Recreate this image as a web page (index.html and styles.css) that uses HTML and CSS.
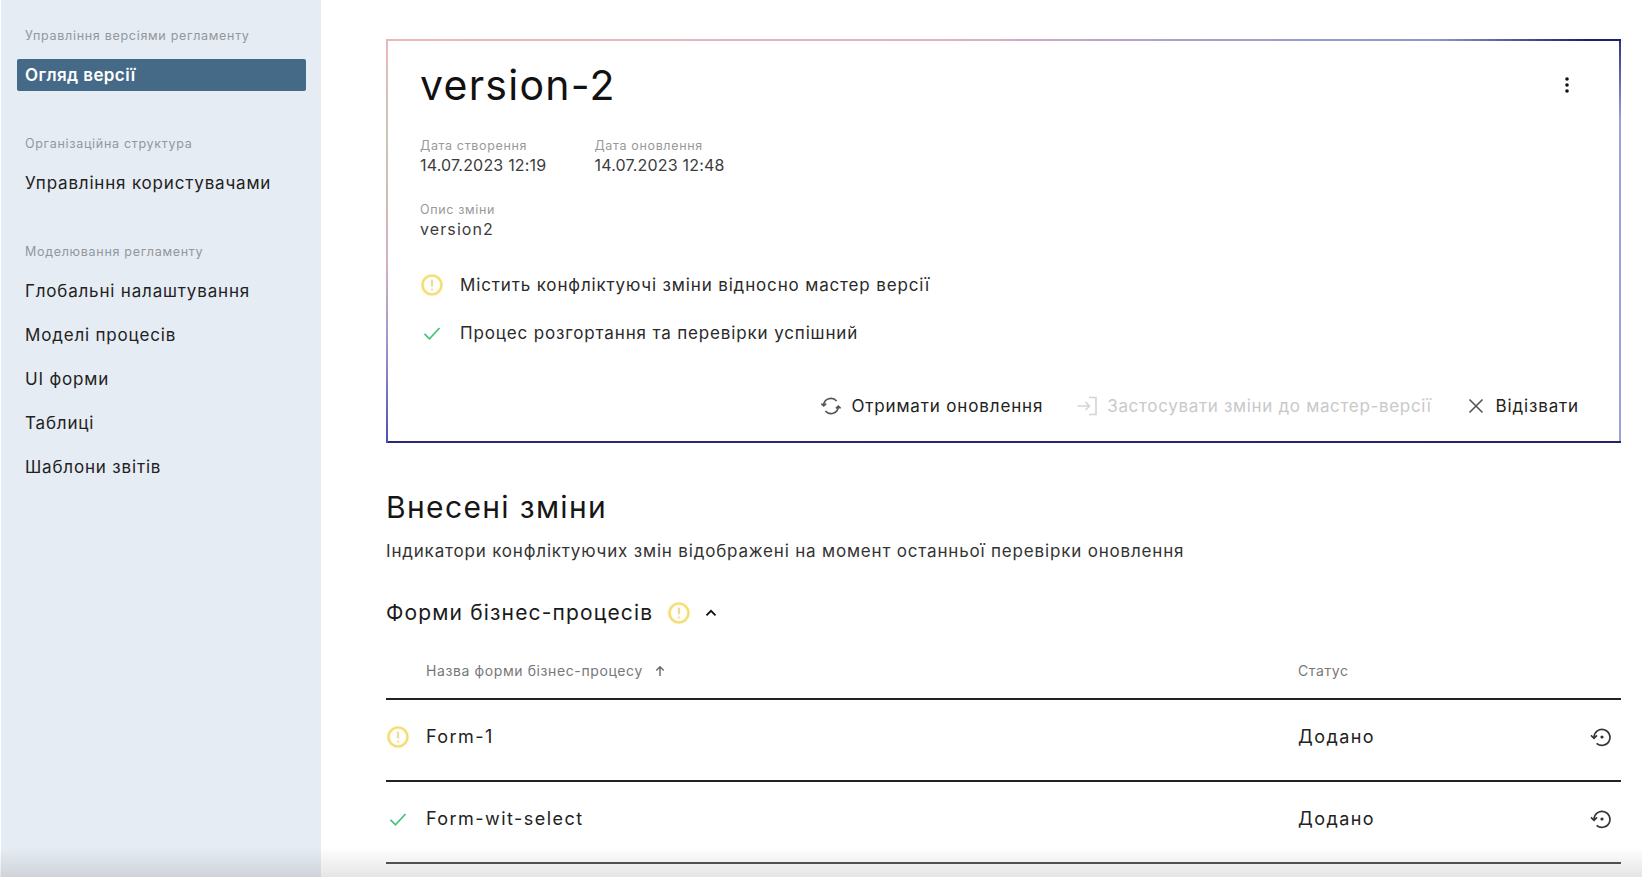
FILE: index.html
```html
<!DOCTYPE html>
<html lang="uk">
<head>
<meta charset="utf-8">
<title>Огляд версії</title>
<link rel="stylesheet" href="styles.css">
</head>
<body>
<div class="app">
  <aside class="sidebar">
    <div class="group">
      <div class="group-label">Управління версіями регламенту</div>
      <a class="nav-item active">Огляд версії</a>
    </div>
    <div class="group">
      <div class="group-label">Організаційна структура</div>
      <a class="nav-item">Управління користувачами</a>
    </div>
    <div class="group">
      <div class="group-label">Моделювання регламенту</div>
      <a class="nav-item">Глобальні налаштування</a>
      <a class="nav-item">Моделі процесів</a>
      <a class="nav-item">UI форми</a>
      <a class="nav-item">Таблиці</a>
      <a class="nav-item">Шаблони звітів</a>
    </div>
  </aside>
  <main class="content">
    <section class="card">
      <div class="card-head">
        <h1 class="version-title">version-2</h1>
        <svg class="kebab" width="6" height="18" viewBox="0 0 6 18"><circle cx="3" cy="3" r="1.8"/><circle cx="3" cy="9" r="1.8"/><circle cx="3" cy="15" r="1.8"/></svg>
      </div>
      <div class="meta-row">
        <div class="meta"><div class="meta-label">Дата створення</div><div class="meta-value">14.07.2023 12:19</div></div>
        <div class="meta"><div class="meta-label">Дата оновлення</div><div class="meta-value">14.07.2023 12:48</div></div>
      </div>
      <div class="meta desc"><div class="meta-label">Опис зміни</div><div class="meta-value wide">version2</div></div>
      <div class="status-list">
        <div class="status-line">
          <svg class="ico-warn" width="24" height="24" viewBox="0 0 24 24"><circle cx="12" cy="12" r="9.5"/><path d="M12 6.8v6.4M12 15.8v1.4"/></svg>
          <span>Містить конфліктуючі зміни відносно мастер версії</span>
        </div>
        <div class="status-line">
          <svg class="ico-ok" width="24" height="24" viewBox="0 0 24 24"><path d="M4.5 12.8l5 5L19.5 7"/></svg>
          <span>Процес розгортання та перевірки успішний</span>
        </div>
      </div>
      <div class="actions">
        <button class="action">
          <svg class="ico-line" width="22" height="22" viewBox="0 0 22 22"><path d="M3.6 10.2a7.4 7.4 0 0 1 13-4.1M18.4 11.8a7.4 7.4 0 0 1-13 4.1"/><path d="M1.4 8.6l2.3 2.3 2.4-2.3M20.6 13.4l-2.3-2.3-2.4 2.3"/></svg>
          Отримати оновлення
        </button>
        <button class="action disabled">
          <svg class="ico-line" width="22" height="22" viewBox="0 0 22 22"><path d="M1.5 11h11.5M9.5 7l4 4-4 4M13 2.5h7v17h-7"/></svg>
          Застосувати зміни до мастер-версії
        </button>
        <button class="action">
          <svg class="ico-line" width="22" height="22" viewBox="0 0 22 22"><path d="M4.5 4.5l13 13M17.5 4.5l-13 13"/></svg>
          Відізвати
        </button>
      </div>
    </section>

    <h2 class="changes-title">Внесені зміни</h2>
    <p class="changes-note">Індикатори конфліктуючих змін відображені на момент останньої перевірки оновлення</p>

    <div class="section-head">
      <span>Форми бізнес-процесів</span>
      <svg class="ico-warn" width="24" height="24" viewBox="0 0 24 24"><circle cx="12" cy="12" r="9.5"/><path d="M12 6.8v6.4M12 15.8v1.4"/></svg>
      <svg class="chevron" width="12" height="8" viewBox="0 0 12 8"><path d="M1.5 6.3L6 1.8l4.5 4.5"/></svg>
    </div>

    <div class="table">
      <div class="row head">
        <div class="cell-icon"></div>
        <div class="cell-name">Назва форми бізнес-процесу
          <svg class="sort" width="12" height="12" viewBox="0 0 12 12"><path d="M6 11V2M2.3 5.5L6 1.8l3.7 3.7"/></svg>
        </div>
        <div class="cell-status">Статус</div>
        <div class="cell-action"></div>
      </div>
      <div class="row">
        <div class="cell-icon"><svg class="ico-warn" width="24" height="24" viewBox="0 0 24 24"><circle cx="12" cy="12" r="9.5"/><path d="M12 6.8v6.4M12 15.8v1.4"/></svg></div>
        <div class="cell-name">Form-1</div>
        <div class="cell-status">Додано</div>
        <div class="cell-action"><svg class="ico-history" width="24" height="24" viewBox="0 0 24 24"><path d="M5 12a8 8 0 1 1 2.6 6.3"/><path d="M2 10.4l3 3 3-3"/><circle class="dot" cx="13" cy="12" r="1.6"/></svg></div>
      </div>
      <div class="row">
        <div class="cell-icon"><svg class="ico-ok" width="24" height="24" viewBox="0 0 24 24"><path d="M4.5 12.8l5 5L19.5 7"/></svg></div>
        <div class="cell-name">Form-wit-select</div>
        <div class="cell-status">Додано</div>
        <div class="cell-action"><svg class="ico-history" width="24" height="24" viewBox="0 0 24 24"><path d="M5 12a8 8 0 1 1 2.6 6.3"/><path d="M2 10.4l3 3 3-3"/><circle class="dot" cx="13" cy="12" r="1.6"/></svg></div>
      </div>
    </div>
  </main>
  <div class="fade"></div>
</div>
</body>
</html>
```
FILE: styles.css
```css
* { box-sizing: border-box; }
html, body { margin: 0; height: 100%; }
body {
  background: #fff;
  color: #1c1c1c;
  font-family: Inter, "Noto Sans", sans-serif;
  overflow: hidden;
}
.app { display: flex; height: 877px; position: relative; overflow: hidden; }

.sidebar {
  width: 320px;
  flex: none;
  margin-left: 1px;
  background: #e6ecf3;
  padding: 28px 15px 0 16px;
  display: flex;
  flex-direction: column;
  gap: 34px;
}
.group-label {
  font-size: 12.5px;
  line-height: 15px;
  letter-spacing: .7px;
  color: #92979d;
  padding-left: 8px;
  margin-bottom: 15px;
  white-space: nowrap;
}
.group:first-child .group-label { margin-bottom: 16px; }
.nav-item {
  display: block;
  font-size: 17px;
  line-height: 34px;
  height: 34px;
  letter-spacing: .82px;
  padding-left: 8px;
  margin-bottom: 10px;
  color: #222;
  white-space: nowrap;
}
.nav-item.active {
  height: 32px;
  line-height: 32px;
  margin-bottom: 11px;
  background: #456a87;
  color: #fff;
  font-weight: 600;
  letter-spacing: .4px;
  border-radius: 2px;
}
.content { flex: 1; padding: 39px 21px 0 65px; min-width: 0; }

.card {
  height: 404px;
  padding: 21px 42px 0 34px;
  background:
    linear-gradient(90deg, #eab8bc 0, #e0b4c0 45%, #a8a0cc 65%, #8a98cc 85%, #20206f 97%) top left / 100% 2px no-repeat,
    linear-gradient(180deg, #e8b8bc 0, #c8c8b0 25%, #d8b0bc 55%, #a098cc 75%, #4a50b0 100%) top left / 2px 100% no-repeat,
    linear-gradient(90deg, #2a2a78, #24246a) bottom left / 100% 2px no-repeat,
    linear-gradient(180deg, #30308a, #9aa0d8 20%, #9aa0d8 100%) top right / 2px 100% no-repeat,
    #fff;
  display: flex;
  flex-direction: column;
}
.card-head { display: flex; justify-content: space-between; align-items: center; padding-right: 9px; }
.version-title { margin: 0; font-size: 41px; line-height: 50px; font-weight: 400; letter-spacing: 1.25px; color: #111; }
.kebab { fill: #111; }
.meta-row { display: flex; gap: 48px; margin-top: 28px; }
.meta-label { font-size: 12.5px; line-height: 15px; letter-spacing: .65px; color: #999; margin-bottom: 1.5px; }
.meta-value { font-size: 16px; line-height: 21px; letter-spacing: .2px; color: #3c3c3c; }
.meta-value.wide { letter-spacing: 1.1px; }
.desc { margin-top: 26.5px; }
.status-list { margin-top: 33.5px; display: flex; flex-direction: column; gap: 24px; }
.status-line { display: flex; align-items: center; gap: 16px; font-size: 17px; line-height: 24px; letter-spacing: .85px; color: #2a2a2a; }
.ico-warn { fill: none; stroke: #f5dc6e; stroke-width: 2.2; flex: none; filter: drop-shadow(0 0 1px #f8eeb8); }
.ico-warn path { stroke: #eadca0; stroke-width: 2; }
.ico-ok { fill: none; stroke: #45c47f; stroke-width: 1.8; flex: none; }
.actions { margin-top: auto; margin-bottom: 25px; display: flex; justify-content: flex-end; gap: 33px; }
.action {
  display: flex; align-items: center; gap: 9px;
  background: none; border: 0; padding: 0;
  font: inherit; font-size: 17px; line-height: 24px; letter-spacing: .85px; color: #222;
}
.action.disabled { color: #c9c9c9; letter-spacing: .67px; }
.ico-line { fill: none; stroke: #555; stroke-width: 1.6; }
.disabled .ico-line { stroke: #d4d4d4; }

.changes-title { margin: 44px 0 0; font-size: 30px; line-height: 40px; font-weight: 400; letter-spacing: 1.35px; color: #161616; }
.changes-note { margin: 12px 0 0; font-size: 17px; line-height: 24px; letter-spacing: .82px; color: #333; }
.section-head { display: flex; align-items: center; margin-top: 35px; font-size: 21px; line-height: 30px; letter-spacing: 1.15px; color: #1a1a1a; }
.section-head .ico-warn { margin-left: 14px; }
.chevron { fill: none; stroke: #111; stroke-width: 1.8; margin-left: 14px; }

.table { margin-top: 15px; }
.row { display: flex; align-items: center; height: 82px; padding-bottom: 8px; border-bottom: 2px solid #222; font-size: 18px; letter-spacing: 1.45px; color: #222; }
.row:last-child { border-bottom-color: #555; }
.row.head { height: 57px; padding-bottom: 0; font-size: 14px; letter-spacing: .6px; color: #777; }
.cell-icon { width: 40px; flex: none; display: flex; margin-top: 2px; }
.cell-name { flex: 1; display: flex; align-items: center; gap: 11px; }
.cell-status { width: 291px; flex: none; }
.cell-action { width: 24px; margin-right: 8px; flex: none; display: flex; margin-top: 2px; }
.sort { fill: none; stroke: #666; stroke-width: 1.4; }
.ico-history { fill: none; stroke: #333; stroke-width: 1.6; }
.ico-history .dot { fill: #333; stroke: none; }

.fade {
  position: absolute; left: 0; right: 0; bottom: 0; height: 30px;
  background: linear-gradient(180deg, rgba(0,0,0,0), rgba(0,0,0,.1));
  pointer-events: none;
}
```
